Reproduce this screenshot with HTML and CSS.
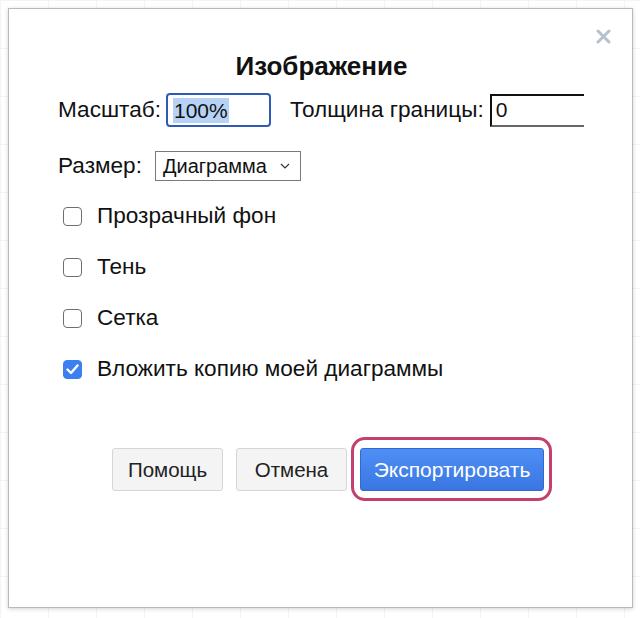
FILE: index.html
```html
<!DOCTYPE html>
<html lang="ru">
<head>
<meta charset="utf-8">
<title>Изображение</title>
<link rel="stylesheet" href="styles.css">
</head>
<body>
<div class="dialog">
  <button class="close" aria-label="Закрыть">
    <svg width="15" height="15" viewBox="0 0 15 15"><path d="M2 2 L13 13 M13 2 L2 13" stroke="#b6c0cf" stroke-width="3" stroke-linecap="round"/></svg>
  </button>
  <div class="title">Изображение</div>
  <div class="row row-scale">
    <label class="lbl">Масштаб:</label>
    <div class="zoom-input"><span class="sel">100%</span></div>
    <label class="lbl lbl-border">Толщина границы:</label>
    <div class="border-input">0</div>
  </div>
  <div class="row row-size">
    <label class="lbl">Размер:</label>
    <div class="select">
      <span>Диаграмма</span>
      <svg class="chev" width="10" height="6" viewBox="0 0 10 6"><path d="M1 1 L5 5 L9 1" fill="none" stroke="#333" stroke-width="1.2"/></svg>
    </div>
  </div>
  <div class="checks">
    <div class="check"><span class="box"></span><span>Прозрачный фон</span></div>
    <div class="check"><span class="box"></span><span>Тень</span></div>
    <div class="check"><span class="box"></span><span>Сетка</span></div>
    <div class="check"><span class="box on"><svg width="13" height="11" viewBox="0 0 13 11"><path d="M1.5 5.5 L5 9 L11.5 1.5" fill="none" stroke="#fff" stroke-width="2.4" stroke-linecap="round" stroke-linejoin="round"/></svg></span><span>Вложить копию моей диаграммы</span></div>
  </div>
  <div class="buttons">
    <button class="btn">Помощь</button>
    <button class="btn">Отмена</button>
    <span class="highlight"><button class="btn primary">Экспортировать</button></span>
  </div>
</div>
</body>
</html>
```
FILE: styles.css
```css
html, body {
  margin: 0;
  padding: 0;
}
body {
  width: 640px;
  height: 618px;
  overflow: hidden;
  background-color: #fff;
  background-image:
    linear-gradient(to right, #f4f4f4 1px, transparent 1px),
    linear-gradient(to bottom, #f4f4f4 1px, transparent 1px);
  background-size: 48px 48px;
  font-family: "Liberation Sans", Arial, sans-serif;
  color: #111;
}
.dialog {
  position: relative;
  box-sizing: border-box;
  margin: 8px 0 0 8px;
  width: 625px;
  height: 600px;
  background: #fff;
  border: 1px solid #b9b9b9;
  box-shadow: 0 1px 4px rgba(0,0,0,0.18);
  padding: 0 48px 0 49px;
}
.close {
  position: absolute;
  top: 20px;
  right: 21px;
  padding: 0;
  border: 0;
  background: none;
  width: 15px;
  height: 15px;
}
.close svg { display: block; }
.title {
  margin-top: 43px;
  text-align: center;
  font-weight: bold;
  font-size: 26px;
  line-height: 28px;
  padding-left: 1px;
}
.row {
  display: flex;
  align-items: center;
  font-size: 22.6px;
}
.lbl { white-space: nowrap; }
.row-scale {
  margin-top: 13px;
  height: 34px;
  overflow: hidden;
}
.zoom-input {
  box-sizing: border-box;
  flex: none;
  width: 105px;
  height: 34px;
  margin-left: 5px;
  border: 2px solid #2f5bb7;
  border-radius: 4px;
  font-size: 21px;
  padding: 3px 0 0 5px;
  line-height: 25px;
}
.sel {
  background: #b6d3f5;
  display: inline-block;
  padding: 0 1px;
}
.lbl-border { margin-left: 19px; }
.border-input {
  box-sizing: border-box;
  flex: none;
  width: 130px;
  height: 33px;
  margin-left: 6px;
  border-top: 2px solid #111;
  border-left: 2px solid #111;
  border-bottom: 2px solid #666;
  font-size: 21px;
  line-height: 28px;
  padding-left: 4px;
}
.row-size {
  margin-top: 24px;
  height: 30px;
}
.select {
  box-sizing: border-box;
  display: flex;
  align-items: center;
  width: 146px;
  height: 30px;
  margin-left: 13px;
  border: 1px solid #7a7a7a;
  font-size: 20px;
  padding-left: 7px;
}
.chev { margin-left: 13px; }
.checks {
  margin-top: 20px;
  display: flex;
  flex-direction: column;
  gap: 21px;
}
.check {
  display: flex;
  align-items: center;
  height: 30px;
  font-size: 22.6px;
  padding-left: 5px;
}
.box {
  box-sizing: border-box;
  flex: none;
  width: 19px;
  height: 19px;
  border: 1.5px solid #6f6f6f;
  border-radius: 4px;
  margin-right: 15px;
  display: flex;
  align-items: center;
  justify-content: center;
}
.box.on {
  background: #3b7ff3;
  border-color: #3b7ff3;
}
.buttons {
  margin-top: 64px;
  padding-left: 54px;
  display: flex;
  gap: 13px;
}
.btn {
  box-sizing: border-box;
  width: 111px;
  height: 43px;
  border: 1px solid #d6d6d6;
  border-radius: 3px;
  background: #f4f4f4;
  font-family: "Liberation Sans", Arial, sans-serif;
  font-size: 20.5px;
  color: #222;
  padding: 0;
}
.highlight {
  position: relative;
  display: block;
}
.highlight::after {
  content: "";
  position: absolute;
  top: -11px;
  left: -9px;
  right: -8px;
  bottom: -10px;
  border: 3px solid #c2416e;
  border-radius: 14px;
}
.btn.primary {
  width: 184px;
  color: #fff;
  border: 1px solid #2f69d2;
  background: linear-gradient(#4e8ff5, #3a76e2);
  font-size: 21px;
}
```
